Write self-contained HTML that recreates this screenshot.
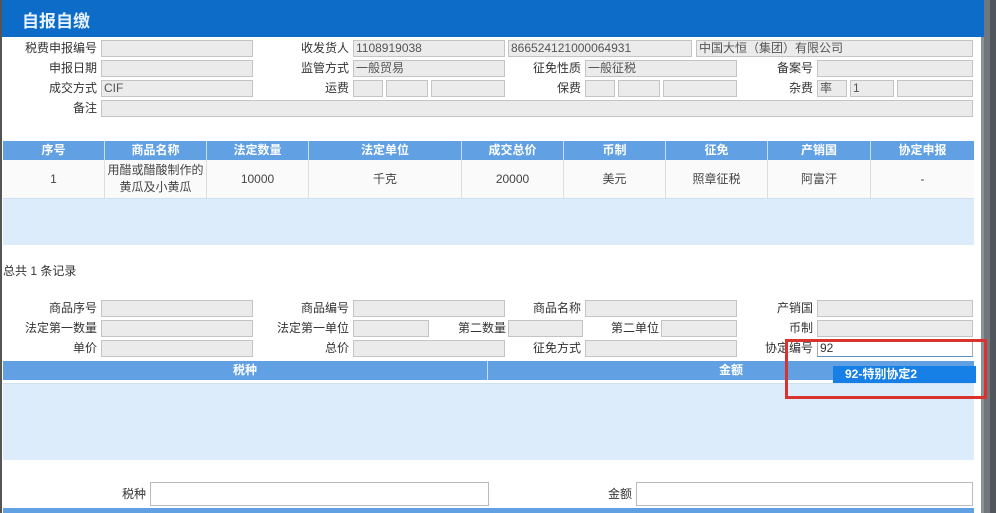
<!DOCTYPE html>
<html><head><meta charset="utf-8"><style>
*{margin:0;padding:0;box-sizing:border-box}
body{width:996px;height:513px;overflow:hidden;background:#fff;position:relative;font-family:"Liberation Sans","Noto Sans CJK SC",sans-serif;font-size:12px;color:#333}
div{position:absolute}
.l{text-align:right;width:120px;height:17px;line-height:17px;color:#333;white-space:nowrap}
.i{height:17px;background:#ebebeb;border:1px solid #c4c4c4;line-height:15px;padding-left:2px;color:#555;white-space:nowrap;overflow:hidden}
.th{top:141px;height:19px;line-height:19px;color:#fff;font-weight:bold;text-align:center;background:#61a0e2;border-right:1px solid #c6e0f7}
.td{top:160px;height:38px;display:flex;align-items:center;justify-content:center;text-align:center;border-right:1px solid #ddd;background:#fafafa;line-height:17px;color:#444}
</style></head><body>
<div style="left:0;top:0;width:984px;height:37px;background:#0d6cc8"></div>
<div style="left:22px;top:7px;color:#e8f2ff;font-size:17px;font-weight:bold">自报自缴</div>
<div style="left:981px;top:37px;width:9px;height:476px;background:#8d9297"></div>
<div style="left:984px;top:0;width:12px;height:513px;background:#6f767c"></div>
<div style="left:990px;top:0;width:6px;height:513px;background:#50565c"></div>
<div style="left:0;top:0;width:2px;height:513px;background:#555"></div>

<!-- form 1 -->
<div class="l" style="left:-23px;top:40px">税费申报编号</div><div class="i" style="left:101px;top:40px;width:152px"></div>
<div class="l" style="left:229px;top:40px">收发货人</div><div class="i" style="left:353px;top:40px;width:152px">1108919038</div>
<div class="i" style="left:508px;top:40px;width:184px">866524121000064931</div>
<div class="i" style="left:696px;top:40px;width:277px">中国大恒（集团）有限公司</div>

<div class="l" style="left:-23px;top:60px">申报日期</div><div class="i" style="left:101px;top:60px;width:152px"></div>
<div class="l" style="left:229px;top:60px">监管方式</div><div class="i" style="left:353px;top:60px;width:152px">一般贸易</div>
<div class="l" style="left:461px;top:60px">征免性质</div><div class="i" style="left:585px;top:60px;width:152px">一般征税</div>
<div class="l" style="left:693px;top:60px">备案号</div><div class="i" style="left:817px;top:60px;width:156px"></div>

<div class="l" style="left:-23px;top:80px">成交方式</div><div class="i" style="left:101px;top:80px;width:152px">CIF</div>
<div class="l" style="left:229px;top:80px">运费</div>
<div class="i" style="left:353px;top:80px;width:30px"></div><div class="i" style="left:386px;top:80px;width:42px"></div><div class="i" style="left:431px;top:80px;width:74px"></div>
<div class="l" style="left:461px;top:80px">保费</div>
<div class="i" style="left:585px;top:80px;width:30px"></div><div class="i" style="left:618px;top:80px;width:42px"></div><div class="i" style="left:663px;top:80px;width:74px"></div>
<div class="l" style="left:693px;top:80px">杂费</div>
<div class="i" style="left:817px;top:80px;width:30px">率</div><div class="i" style="left:850px;top:80px;width:44px">1</div><div class="i" style="left:897px;top:80px;width:76px"></div>

<div class="l" style="left:-23px;top:100px">备注</div><div class="i" style="left:101px;top:100px;width:872px"></div>

<!-- table -->
<div class="th" style="left:3px;width:102px">序号</div>
<div class="th" style="left:105px;width:102px">商品名称</div>
<div class="th" style="left:207px;width:102px">法定数量</div>
<div class="th" style="left:309px;width:153px">法定单位</div>
<div class="th" style="left:462px;width:102px">成交总价</div>
<div class="th" style="left:564px;width:102px">币制</div>
<div class="th" style="left:666px;width:102px">征免</div>
<div class="th" style="left:768px;width:103px">产销国</div>
<div class="th" style="left:871px;width:103px;border-right:none">协定申报</div>
<div class="td" style="left:3px;width:102px">1</div>
<div class="td" style="left:105px;width:102px">用醋或醋酸制作的<br>黄瓜及小黄瓜</div>
<div class="td" style="left:207px;width:102px">10000</div>
<div class="td" style="left:309px;width:153px">千克</div>
<div class="td" style="left:462px;width:102px">20000</div>
<div class="td" style="left:564px;width:102px">美元</div>
<div class="td" style="left:666px;width:102px">照章征税</div>
<div class="td" style="left:768px;width:103px">阿富汗</div>
<div class="td" style="left:871px;width:103px;border-right:none">-</div>
<div style="left:3px;top:198px;width:971px;height:47px;background:#ddecfa;border-top:1px solid #cfe0f2"></div>
<div style="left:3px;top:262px;font-size:12px;color:#333">总共 1 条记录</div>

<!-- form 2 -->
<div class="l" style="left:-23px;top:300px">商品序号</div><div class="i" style="left:101px;top:300px;width:152px"></div>
<div class="l" style="left:229px;top:300px">商品编号</div><div class="i" style="left:353px;top:300px;width:152px"></div>
<div class="l" style="left:461px;top:300px">商品名称</div><div class="i" style="left:585px;top:300px;width:152px"></div>
<div class="l" style="left:693px;top:300px">产销国</div><div class="i" style="left:817px;top:300px;width:156px"></div>

<div class="l" style="left:-23px;top:320px">法定第一数量</div><div class="i" style="left:101px;top:320px;width:152px"></div>
<div class="l" style="left:229px;top:320px">法定第一单位</div><div class="i" style="left:353px;top:320px;width:76px"></div>
<div class="l" style="left:386px;top:320px">第二数量</div><div class="i" style="left:508px;top:320px;width:75px"></div>
<div class="l" style="left:539px;top:320px">第二单位</div><div class="i" style="left:661px;top:320px;width:76px"></div>
<div class="l" style="left:693px;top:320px">币制</div><div class="i" style="left:817px;top:320px;width:156px"></div>

<div class="l" style="left:-23px;top:340px">单价</div><div class="i" style="left:101px;top:340px;width:152px"></div>
<div class="l" style="left:229px;top:340px">总价</div><div class="i" style="left:353px;top:340px;width:152px"></div>
<div class="l" style="left:461px;top:340px">征免方式</div><div class="i" style="left:585px;top:340px;width:152px"></div>
<div class="l" style="left:693px;top:340px">协定编号</div><div class="i" style="left:817px;top:340px;width:156px;background:#fff;border-color:#aaa;border-bottom:1px solid #5a8cc8;color:#333">92</div>

<div class="th" style="left:3px;top:361px;width:485px">税种</div>
<div class="th" style="left:488px;top:361px;width:486px;border-right:none">金额</div>
<div style="left:3px;top:383px;width:971px;height:77px;background:#ddecfa;border-top:1px solid #cfe0f2"></div>

<div style="left:833px;top:366px;width:143px;height:17px;background:#1680e6;color:#fff;font-weight:bold;line-height:17px;padding-left:12px;font-size:12px">92-特别协定2</div>
<div style="left:785px;top:339px;width:202px;height:60px;border:3px solid #d8332e"></div>

<div class="l" style="left:26px;top:486px">税种</div><div class="i" style="left:150px;top:482px;width:339px;height:24px;background:#fff;border-color:#bbb"></div>
<div class="l" style="left:512px;top:486px">金额</div><div class="i" style="left:636px;top:482px;width:337px;height:24px;background:#fff;border-color:#bbb"></div>
<div style="left:3px;top:508px;width:971px;height:5px;background:#61a0e2"></div>
</body></html>
